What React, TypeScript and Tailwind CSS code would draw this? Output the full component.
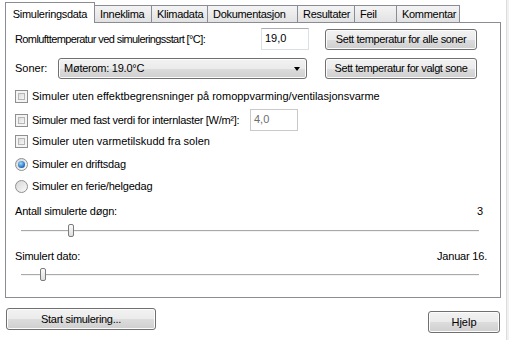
import React from "react";

const btn =
  "flex items-center justify-center whitespace-nowrap border border-[#707070] rounded-[3px] bg-[linear-gradient(#f2f2f2_0%,#ebebeb_50%,#dddddd_50%,#cfcfcf_100%)] shadow-[inset_0_0_0_1px_#fcfcfc] text-black";

function Tab({ label, active, width }: { label: string; active?: boolean; width: string }) {
  if (active) {
    return (
      <div
        className={`${width} h-[21px] -mb-px relative z-10 bg-white border border-b-0 border-[#898c95] flex items-start justify-center pt-[5px] tracking-[-0.3px]`}
      >
        {label}
      </div>
    );
  }
  return (
    <div
      className={`${width} h-[17px] border border-b-0 border-l-0 border-[#898c95] bg-[linear-gradient(#f4f4f4,#e2e2e2)] flex items-center pl-[5px] tracking-[-0.3px]`}
    >
      {label}
    </div>
  );
}

function Checkbox({ label, tight }: { label: string; tight?: boolean }) {
  return (
    <div className="flex items-center h-[13px]">
      <div className="w-[13px] h-[13px] border border-[#8e8f8f] bg-[#f4f4f4] p-[2px]">
        <div className="w-full h-full border border-[#b4b6b8] bg-[linear-gradient(135deg,#dcdcdc,#f7f7f7)]" />
      </div>
      <span className={tight ? "ml-[4px] tracking-[-0.3px]" : "ml-[4px]"}>{label}</span>
    </div>
  );
}

function Radio({ label, checked }: { label: string; checked?: boolean }) {
  return (
    <div className="flex items-center h-[13px]">
      <div className="w-[13px] h-[13px] rounded-full border border-[#8e8f8f] bg-[linear-gradient(135deg,#d6d6d6,#fafafa)] flex items-center justify-center">
        {checked && (
          <div className="w-[7px] h-[7px] rounded-full bg-[radial-gradient(circle_at_40%_35%,#9edcff,#1f6fc0_65%,#0d4a8a)]" />
        )}
      </div>
      <span className="ml-[4px] tracking-[-0.2px]">{label}</span>
    </div>
  );
}

function Slider({ pos }: { pos: number }) {
  return (
    <div className="relative h-[14px] ml-[15px] w-[458px]">
      <div className="absolute left-0 right-0 top-[6px] h-[2px] border-t border-[#a9a9a9] bg-[#f3f3f3]" />
      <div
        className="absolute top-0 w-[6px] h-[13px] border border-[#7b7b7b] rounded-[2px] bg-[linear-gradient(#fbfbfb,#dedede)]"
        style={{ left: pos }}
      />
    </div>
  );
}

export default function App() {
  return (
    <div className="w-[509px] h-[340px] bg-white flex text-[11px] leading-[13px] text-black whitespace-nowrap font-['Liberation_Sans',Arial,sans-serif] overflow-hidden">
      <div className="w-[506px] flex flex-col">
        {/* Tabs */}
        <div className="h-[22px] pl-[5px] flex items-end">
          <Tab label="Simuleringsdata" active width="w-[90px]" />
          <Tab label="Inneklima" width="w-[57px]" />
          <Tab label="Klimadata" width="w-[56px]" />
          <Tab label="Dokumentasjon" width="w-[90px]" />
          <Tab label="Resultater" width="w-[57px]" />
          <Tab label="Feil" width="w-[42px]" />
          <Tab label="Kommentar" width="w-[63px]" />
        </div>

        {/* Panel */}
        <div className="ml-[5px] w-[496px] h-[276px] border border-[#898c95] flex flex-col pl-[9px] pr-[13px]">
          <div className="flex items-center h-[22px] mt-[5px]">
            <span className="w-[246px] tracking-[-0.6px]">
              Romlufttemperatur ved simuleringsstart [°C]:
            </span>
            <div className="w-[48px] h-[22px] border border-[#dbdfe6] border-t-[#abadb3] flex items-start pt-[3px] pl-[3px]">
              19,0
            </div>
            <div className={`${btn} ml-[16px] w-[152px] h-[21px] tracking-[-0.4px]`}>
              Sett temperatur for alle soner
            </div>
          </div>

          <div className="flex items-center h-[21px] mt-[8px]">
            <span className="w-[43px]">Soner:</span>
            <div className={`${btn} !justify-between w-[249px] h-[21px] px-[5px]`}>
              <span className="tracking-[-0.25px]">Møterom: 19.0°C</span>
              <span className="w-0 h-0 border-l-[3.5px] border-r-[3.5px] border-t-[4px] border-l-transparent border-r-transparent border-t-black mr-[1px]" />
            </div>
            <div className={`${btn} ml-[18px] w-[152px] h-[21px] tracking-[-0.4px]`}>
              Sett temperatur for valgt sone
            </div>
          </div>

          <div className="mt-[11px]">
            <Checkbox label="Simuler uten effektbegrensninger på romoppvarming/ventilasjonsvarme" />
          </div>

          <div className="flex items-center h-[22px] mt-[6px]">
            <div className="w-[235px]">
              <Checkbox label="Simuler med fast verdi for internlaster [W/m²]:" tight />
            </div>
            <div className="w-[48px] h-[22px] border border-[#c9c9c9] flex items-start pt-[3px] pl-[3px] text-[#6d6d6d]">
              4,0
            </div>
          </div>

          <div className="mt-[4px]">
            <Checkbox label="Simuler uten varmetilskudd fra solen" />
          </div>

          <div className="mt-[10px]">
            <Radio label="Simuler en driftsdag" checked />
          </div>
          <div className="mt-[9px]">
            <Radio label="Simuler en ferie/helgedag" />
          </div>

          <div className="flex justify-between h-[14px] mt-[12px] pr-[4px] tracking-[-0.2px]">
            <span>Antall simulerte døgn:</span>
            <span>3</span>
          </div>
          <div className="mt-[5px] -ml-[9px]">
            <Slider pos={47} />
          </div>

          <div className="flex justify-between h-[14px] mt-[12px] tracking-[-0.2px]">
            <span>Simulert dato:</span>
            <span>Januar 16.</span>
          </div>
          <div className="mt-[4px] -ml-[9px]">
            <Slider pos={19} />
          </div>
        </div>

        {/* Bottom buttons */}
        <div className="flex justify-between items-start mt-[10px] pl-[6px] pr-[6px]">
          <div className={`${btn} w-[150px] h-[22px] tracking-[-0.3px]`}>Start simulering...</div>
          <div className={`${btn} w-[72px] h-[22px] mt-[3px]`}>Hjelp</div>
        </div>
      </div>
      <div className="w-[3px] border-l border-[#dcdcdc] bg-[#f0f0f0]" />
    </div>
  );
}
